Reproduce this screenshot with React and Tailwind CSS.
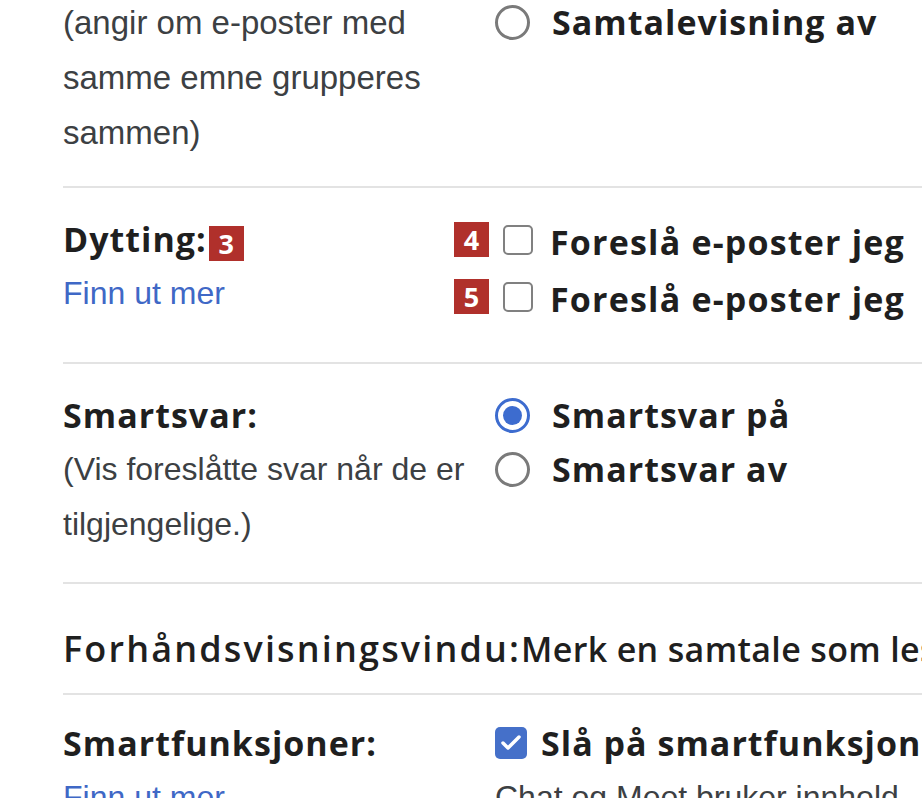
import { Check } from 'lucide-react'

// Innstillinger (utsnitt, forstørret): radioknapper, avkrysningsbokser og nummererte merker.
const SANS = "font-['Liberation_Sans',Arial,sans-serif]"
const HEAD = "font-['Open_Sans',sans-serif] font-bold tracking-[0.03em]"

function Radio({ on }) {
  if (on) {
    return (
      <span className="flex h-[35px] w-[35px] shrink-0 items-center justify-center rounded-full border-[3px] border-[#3d6ccf]">
        <span className="h-[19px] w-[19px] rounded-full bg-[#3d6ccf]" />
      </span>
    )
  }
  return <span className="h-[35px] w-[35px] shrink-0 rounded-full border-[3px] border-[#7a7a7a]" />
}

function Badge({ n, className = '' }) {
  return (
    <span className={`flex h-[35px] w-[35px] items-center justify-center bg-[#b0302b] text-[27px] font-bold leading-none text-white font-['Open_Sans',sans-serif] ${className}`}>
      {n}
    </span>
  )
}

export default function App() {
  return (
    <div className="h-[798px] w-[922px] overflow-hidden bg-white pl-[63px] text-[#1f1f1f]">
      {/* Samtalevisning */}
      <section className="-mt-[5px] grid grid-cols-[432px_1fr] border-b-2 border-[#e3e3e3] pb-[26px]">
        <div className={`${SANS} text-[33px] leading-[55px] text-[#3c4043]`}>
          <div>(angir om e-poster med</div>
          <div>samme emne grupperes</div>
          <div>sammen)</div>
        </div>
        <div className="flex h-[55px] items-center gap-[22px] whitespace-nowrap">
          <Radio />
          <span className={`${HEAD} text-[34px]`}>Samtalevisning av</span>
        </div>
      </section>

      {/* Dytting */}
      <section className="grid grid-cols-[432px_1fr] border-b-2 border-[#e3e3e3] pb-[34px] pt-[24px]">
        <div>
          <div className="flex h-[54px] items-center gap-[2px]">
            <span className={`${HEAD} text-[34px]`}>Dytting:</span>
            <Badge n="3" className="mt-[8px]" />
          </div>
          <div className={`${SANS} h-[54px] text-[32px] leading-[54px] text-[#3f68c6]`}>Finn ut mer</div>
        </div>
        <div className="whitespace-nowrap pt-[2px]">
          {['4', '5'].map((n) => (
            <div key={n} className="relative flex h-[57px] items-center gap-[17px] pl-[8px]">
              <Badge n={n} className="absolute -left-[41px] top-[8px]" />
              <span className="-mt-[5px] h-[30px] w-[30px] shrink-0 rounded-[5px] border-[2.5px] border-[#808080]" />
              <span className="font-['Open_Sans',sans-serif] text-[34px] font-bold tracking-[0.035em]">Foreslå e-poster jeg</span>
            </div>
          ))}
        </div>
      </section>

      {/* Smartsvar */}
      <section className="grid grid-cols-[432px_1fr] border-b-2 border-[#e3e3e3] pb-[30px] pt-[24px]">
        <div>
          <div className={`${HEAD} h-[54px] text-[34px] leading-[54px]`}>Smartsvar:</div>
          <div className={`${SANS} whitespace-nowrap text-[32px] leading-[55px] text-[#3c4043]`}>(Vis foreslåtte svar når de er</div>
          <div className={`${SANS} text-[32px] leading-[55px] text-[#3c4043]`}>tilgjengelige.)</div>
        </div>
        <div className="whitespace-nowrap">
          <div className="flex h-[54px] items-center gap-[22px]">
            <Radio on />
            <span className={`${HEAD} text-[34px]`}>Smartsvar på</span>
          </div>
          <div className="flex h-[55px] items-center gap-[22px]">
            <Radio />
            <span className={`${HEAD} text-[34px]`}>Smartsvar av</span>
          </div>
        </div>
      </section>

      {/* Forhåndsvisningsvindu */}
      <section className="flex h-[111px] items-center whitespace-nowrap border-b-2 border-[#e3e3e3] pt-[21px]">
        <span className="font-['Open_Sans',sans-serif] font-semibold">
          <span className="text-[36px] tracking-[0.06em]">Forhåndsvisningsvindu:</span>
          <span className="text-[34px] tracking-[0.01em]">Merk en samtale som lest</span>
        </span>
      </section>

      {/* Smartfunksjoner */}
      <section className="grid grid-cols-[432px_1fr] pt-[21px]">
        <div>
          <div className={`${HEAD} h-[54px] text-[34px] leading-[54px]`}>Smartfunksjoner:</div>
          <div className={`${SANS} text-[32px] leading-[54px] text-[#3f68c6]`}>Finn ut mer</div>
        </div>
        <div className="whitespace-nowrap">
          <div className="flex h-[54px] items-center gap-[14px]">
            <span className="flex h-[32px] w-[32px] shrink-0 items-center justify-center rounded-[5px] bg-[#4570c9]">
              <Check className="h-[24px] w-[24px] text-white" strokeWidth={3.5} />
            </span>
            <span className={`${HEAD} text-[34px]`}>Slå på smartfunksjoner</span>
          </div>
          <div className={`${SANS} text-[32px] leading-[54px] text-[#3c4043]`}>Chat og Meet bruker innhold</div>
        </div>
      </section>
    </div>
  )
}
